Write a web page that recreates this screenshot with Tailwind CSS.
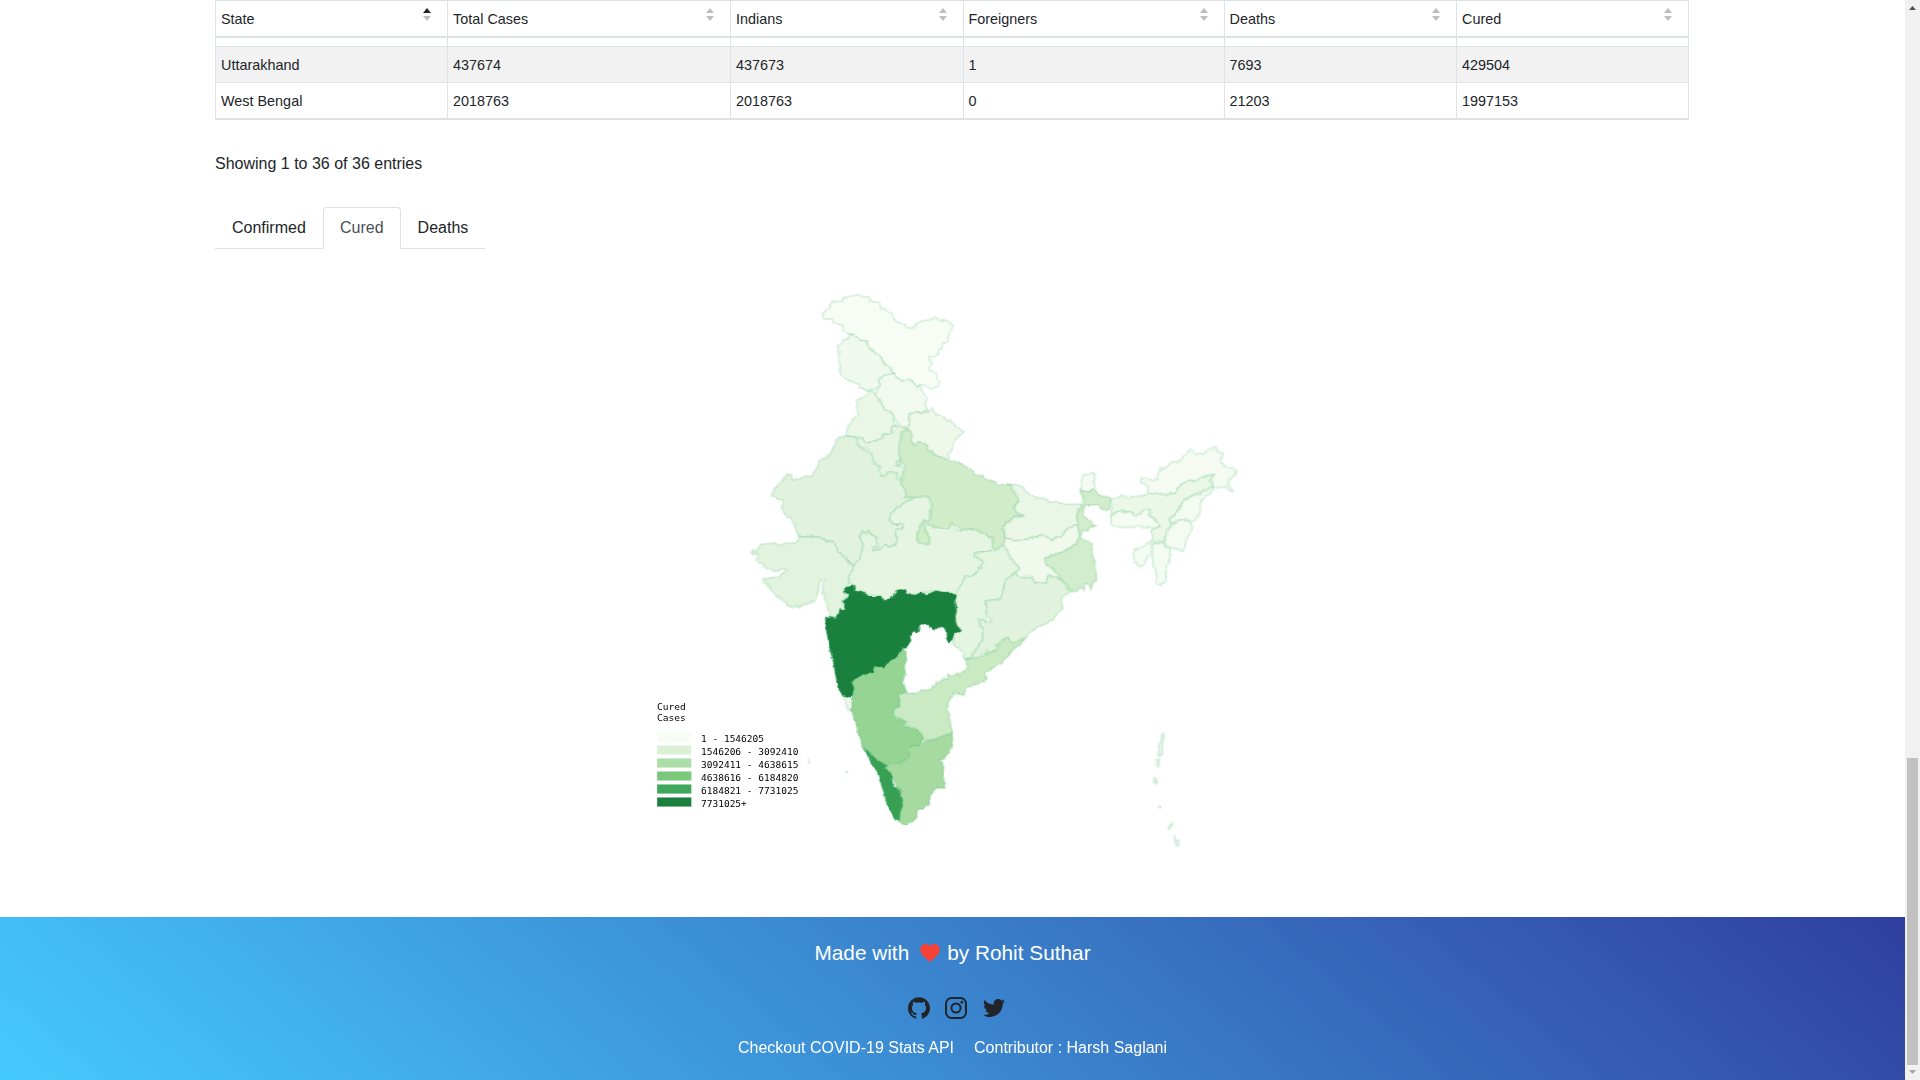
<!DOCTYPE html>
<html lang="en">
<head>
<meta charset="utf-8">
<title>COVID-19 India Stats</title>
<script src="https://cdn.jsdelivr.net/npm/@tailwindcss/browser@4"></script>
</head>
<body class="flex h-[1080px] overflow-hidden bg-white font-['Liberation_Sans',Arial,sans-serif] text-base text-[#212529]">
<div class="flex w-[1905px] flex-col">
  <main class="flex h-[917px] flex-col pl-[215px]">
    <table class="w-[1474px] table-fixed border-separate border-spacing-0 border-l border-[#dee2e6] text-[14.4px] leading-[22px]">
      <colgroup><col class="w-[232px]"><col class="w-[283px]"><col class="w-[232.5px]"><col class="w-[261px]"><col class="w-[232.5px]"><col class="w-[232px]"></colgroup>
      <thead>
        <tr id="head"></tr>
      </thead>
      <tbody id="rows"></tbody>
    </table>

    <p class="mt-8 leading-6">Showing 1 to 36 of 36 entries</p>

    <ul class="mt-[31px] flex w-[270px] border-b border-[#dee2e6] leading-6">
      <li class="-mb-px border border-transparent py-2 pr-[16.2px] pl-4">Confirmed</li>
      <li class="-mb-px rounded-t border border-[#dee2e6] border-b-white bg-white px-4 py-2 text-[#495057]">Cured</li>
      <li class="-mb-px border border-transparent px-4 py-2">Deaths</li>
    </ul>

    <svg class="block h-[668px] w-[1475px]" viewBox="215 249 1475 668" font-family="DejaVu Sans Mono, monospace" font-size="9.52">
      <defs>
        <filter id="coast" filterUnits="userSpaceOnUse" x="730" y="270" width="530" height="600" color-interpolation-filters="sRGB">
          <feTurbulence type="fractalNoise" baseFrequency="0.16" numOctaves="2" seed="4" result="n"/>
          <feDisplacementMap in="SourceGraphic" in2="n" scale="4" xChannelSelector="R" yChannelSelector="G"/>
        </filter>
      </defs>
      <g filter="url(#coast)" transform="translate(-.5 0)" stroke="#45b96c" stroke-opacity=".18" stroke-width="6" stroke-linejoin="round">
        <g transform="translate(800 280) scale(.33333)">
          <path fill="#f7fcf5" d="M70,100 85,85 98,66 133,62 128,56 175,45 190,50 208,50 215,64 238,68 245,82 278,100 284,118 318,135 320,143 338,143 352,130 385,118 400,118 407,110 415,118 445,122 459,138 455,155 448,165 444,188 430,190 428,205 418,210 412,228 388,232 396,250 388,262 392,272 412,276 412,295 424,308 412,320 395,330 378,320 370,312 355,322 345,312 330,298 308,303 290,292 272,262 258,256 245,232 210,205 200,182 182,182 166,166 147,166 130,152 132,138 105,128 97,118 70,116Z"/>
          <path fill="#f0f9ee" d="M147,166 166,166 182,182 200,182 210,205 245,232 258,256 272,262 283,280 265,282 238,298 240,318 228,328 208,333 190,325 178,323 175,312 150,303 123,286 122,262 118,250 118,215 113,200 130,188 132,178 145,176Z"/>
          <path fill="#f2faf0" d="M265,282 283,282 290,292 308,303 330,298 345,312 355,322 362,315 366,330 382,352 378,375 386,397 352,396 332,402 330,435 320,446 300,435 282,412 272,392 252,390 245,368 228,345 240,318 238,298Z"/>
          <path fill="#eaf7e6" d="M208,333 225,335 228,345 245,368 252,390 272,392 282,412 285,425 290,437 278,440 275,460 250,466 250,478 225,480 205,490 188,475 172,472 140,468 142,445 165,412 178,402 170,385 170,362 195,348 205,342Z"/>
          <path fill="#e6f5e2" d="M290,437 300,438 320,446 305,465 298,500 302,530 288,545 300,558 312,560 318,590 298,598 290,575 265,578 255,590 245,588 240,570 220,545 213,512 195,505 175,497 170,478 188,475 205,490 225,480 250,478 250,466 275,460 278,440Z"/>
          <path fill="#d8efd3" d="M290,545 300,534 309,548 303,558 292,554Z"/>
          <path fill="#f0f8ec" d="M332,402 352,396 386,397 397,383 410,402 435,412 455,425 465,435 494,455 478,470 462,485 456,515 448,520 445,540 415,530 398,515 380,508 385,500 362,484 345,496 332,480 340,465 322,446 330,435Z"/>
        </g>
        <g transform="translate(740 420) scale(.33333)">
          <path fill="#e1f3dd" d="M318,47 350,52 352,75 372,88 395,98 405,130 422,145 425,172 448,160 470,155 472,178 490,180 490,195 505,218 495,232 530,230 500,245 455,280 450,300 462,312 490,312 492,322 468,330 475,355 468,375 455,378 432,375 425,388 400,392 398,380 412,380 412,352 395,345 388,332 378,340 368,335 362,355 372,370 365,405 348,436 325,425 312,408 298,395 280,365 260,362 240,352 215,350 178,352 168,325 155,295 138,290 128,275 132,245 98,230 102,208 125,185 142,162 155,165 160,180 190,172 218,168 235,135 242,120 270,105 295,55Z"/>
          <path fill="#e2f4de" d="M178,352 215,350 240,352 260,362 280,365 298,395 325,425 343,437 335,465 325,470 330,490 318,500 315,520 320,545 305,545 318,560 300,572 290,595 270,592 262,560 250,520 250,490 258,478 240,482 238,510 228,538 200,552 165,565 145,558 110,525 70,482 72,472 82,478 118,468 138,452 135,445 105,455 80,445 50,420 55,405 45,400 65,372 105,370 118,376 150,365 165,370 178,360ZM32,400 44,390 42,406Z"/>
          <path fill="#e6f5e2" d="M343,437 348,436 365,405 372,370 362,355 368,335 378,340 388,332 395,345 412,352 412,380 398,380 400,392 425,388 432,375 455,378 468,375 475,355 468,330 492,322 490,312 462,312 450,300 455,280 500,245 530,230 568,235 578,258 570,285 575,300 565,305 552,310 540,322 533,350 540,370 568,375 570,355 555,325 565,312 580,322 625,322 638,310 648,328 668,333 695,323 720,335 758,352 760,385 755,395 705,397 705,408 732,422 725,440 705,465 680,470 665,495 655,532 645,530 635,518 600,515 580,512 545,518 500,522 498,510 475,510 455,532 435,543 425,528 375,522 345,510 347,497 330,490 325,470 335,465Z"/>
        </g>
        <g transform="translate(880 410) scale(.33333)">
          <path fill="#d0ecc9" d="M82,56 100,70 92,90 105,105 122,93 145,108 142,118 170,138 205,150 222,152 240,158 262,172 285,190 310,200 335,210 355,222 398,226 405,245 420,270 405,290 412,308 433,318 400,325 372,350 378,380 372,405 365,420 348,422 340,412 338,382 300,365 275,355 248,363 218,340 205,355 160,352 145,342 137,334 135,355 150,385 148,402 118,400 113,380 120,352 132,330 148,330 155,310 150,305 158,280 150,265 118,258 75,262 80,245 68,225 68,200 78,180 75,165 62,155 58,120 65,85 70,70Z"/>
          <path fill="#eaf6e6" d="M398,226 412,222 432,232 438,245 468,262 488,262 495,270 525,275 565,282 610,283 600,300 592,320 595,345 585,345 560,360 550,380 530,382 520,392 492,375 480,380 445,385 425,395 405,390 378,385 372,350 400,325 433,318 412,308 405,290 420,270 405,245Z"/>
          <path fill="#f1f9ed" d="M378,385 405,390 425,395 445,385 480,380 492,375 520,392 530,382 550,380 560,360 585,345 595,350 600,375 590,400 575,412 550,425 525,435 495,445 500,460 520,475 545,500 545,510 505,495 500,520 480,518 460,515 458,500 425,500 405,492 420,478 400,450 385,425 372,405Z"/>
          <path fill="#d1edcb" d="M602,238 625,242 640,238 660,255 697,265 692,285 685,302 665,298 658,285 620,285 610,300 610,318 630,330 635,342 652,347 628,355 625,362 610,365 603,380 615,390 640,402 640,445 648,460 652,510 640,520 635,540 628,522 615,525 615,543 600,535 580,546 545,510 520,475 500,460 495,445 525,435 550,425 575,412 590,400 600,375 595,350 592,320 600,300 610,283 612,260 602,250Z"/>
          <path fill="#f5fbf3" d="M604,238 608,200 635,187 648,195 642,215 648,235 625,242Z"/>
        </g>
        <g transform="translate(1040 430) scale(.33333)">
          <path fill="#f5fbf3" d="M325,192 325,165 303,158 305,145 355,150 350,140 362,115 385,110 390,97 425,92 440,70 455,57 465,68 490,72 510,58 528,50 540,68 552,75 540,92 555,110 585,115 592,130 570,150 568,165 580,183 568,180 560,170 520,175 520,168 512,150 522,134 500,138 475,148 435,158 415,175 405,190 375,195 355,190Z"/>
          <path fill="#ebf7e7" d="M218,207 245,197 255,202 300,198 330,192 355,190 375,195 405,190 415,175 435,158 475,148 500,138 522,134 512,150 520,168 480,188 450,200 430,215 415,245 390,270 398,283 380,300 372,340 358,335 342,343 335,315 335,300 360,290 350,270 330,258 330,240 315,240 290,258 270,245 230,245 215,260 215,235Z"/>
          <path fill="#f4fbf2" d="M215,260 230,245 270,245 290,258 315,240 330,240 330,258 350,270 360,290 345,296 325,290 240,292 215,282ZM485,190 520,172 525,180 505,195 485,210 482,245 470,270 455,275 435,268 410,272 398,285 390,270 415,245 430,215 450,200ZM342,343 358,335 372,340 378,350 392,355 392,375 388,400 380,410 380,450 365,465 350,463 350,430 342,400 336,370ZM335,335 335,370 320,385 315,405 302,413 285,395 280,375 290,355 315,345Z"/>
          <path fill="#f4fbf2" d="M398,285 410,272 435,268 455,275 458,295 445,320 432,362 400,355 375,345 380,310Z"/>
        </g>
        <g transform="translate(810 570) scale(.33333)">
          <path fill="#e4f5e0" d="M442,80 448,55 455,45 470,20 495,15 515,-10 522,-28 495,-42 495,-53 545,-55 558,-58 582,-75 600,-40 630,-2 615,12 600,20 590,30 575,88 532,92 530,125 532,155 505,148 520,180 520,210 500,235 485,265 465,265 458,245 430,220 435,188 450,190 457,180 440,165 438,140 442,120 435,95Z"/>
          <path fill="#e1f3dd" d="M615,12 635,20 668,20 672,38 710,40 715,15 755,30 785,65 760,80 755,95 762,115 740,135 730,152 690,170 660,190 640,210 610,218 592,202 575,222 560,225 568,235 540,248 530,250 500,262 470,268 485,265 500,235 520,210 520,180 505,148 548,155 530,125 532,92 575,88 590,30Z"/>
          <path fill="#19813d" d="M105,52 125,48 137,46 138,62 165,68 178,78 218,78 225,94 245,82 262,64 285,58 292,72 315,74 335,68 355,72 378,62 400,66 425,66 442,80 435,95 442,120 438,140 440,165 457,180 450,190 435,188 428,212 418,220 410,212 408,178 390,172 378,178 350,165 332,162 325,188 308,188 302,200 305,212 290,235 278,236 262,262 240,272 228,292 195,290 190,310 160,315 130,332 136,350 128,378 112,380 98,375 85,355 78,318 72,280 60,235 50,180 47,145 62,142 78,146 85,130 88,115 103,120 108,108 98,92 110,85 118,72 105,70Z"/>
        </g>
        <g transform="translate(820 640) scale(.33333)">
          <path fill="#c9eac2" d="M620,-8 610,5 575,35 545,70 510,90 495,100 500,120 480,132 445,138 430,167 405,158 388,180 385,205 392,240 398,280 385,285 365,290 345,298 318,303 300,290 295,270 265,260 250,262 260,245 240,240 225,228 222,205 240,200 240,160 262,158 290,160 300,150 325,150 345,140 350,125 385,115 385,102 405,108 410,97 420,105 430,92 447,80 432,58 470,55 500,45 502,30 510,40 538,20 532,15 562,-8 580,8Z"/>
          <path fill="#95d492" d="M248,26 260,35 262,60 255,78 258,100 250,125 262,157 240,160 240,200 222,205 225,228 240,240 260,245 250,262 265,260 295,270 312,295 300,318 290,320 280,316 265,328 268,355 240,370 200,375 178,362 150,340 128,318 118,285 108,245 92,212 98,200 96,170 105,150 98,125 130,105 160,100 165,80 198,80 210,62 232,52Z"/>
          <path fill="#f1f9ee" d="M66,167 82,172 96,168 97,200 90,212 80,190Z"/>
          <path fill="#a6daa0" d="M398,280 400,300 395,325 375,355 365,362 373,375 372,405 376,445 350,445 330,480 330,495 295,510 288,540 258,557 240,547 242,520 250,490 242,470 245,448 228,440 222,418 200,398 195,378 240,370 268,355 265,328 280,316 300,320 312,305 345,298 365,290Z"/>
          <path fill="#37a055" d="M126,318 150,340 178,362 205,378 195,382 215,400 222,440 245,448 242,470 250,490 242,520 240,547 225,535 205,505 195,465 180,420 170,390 155,365Z"/>
          <path fill="#d8efdc" stroke-width="3" d="M80,393 86,392 88,399 83,398ZM-34,360 -29,362 -28,370 -32,368Z"/>
        </g>
        <g transform="translate(1130 710) scale(.33333)" fill="#e8f6ea">
          <path d="M95,75 104,68 102,92 96,94ZM90,97 101,100 100,128 90,140 86,120ZM80,150 91,148 87,172 80,165ZM72,208 80,206 81,220 73,220ZM87,290 94,289 93,295 88,295ZM117,352 130,338 128,350 120,358ZM134,378 148,396 148,412 138,402Z"/>
        </g>
      </g>
      <g fill="#000">
        <text x="657" y="710">Cured</text><text x="657" y="721">Cases</text>
        <text x="701" y="742">1 - 1546205</text>
        <text x="701" y="755">1546206 - 3092410</text>
        <text x="701" y="768">3092411 - 4638615</text>
        <text x="701" y="781">4638616 - 6184820</text>
        <text x="701" y="794">6184821 - 7731025</text>
        <text x="701" y="807">7731025+</text>
      </g>
      <g stroke="#fff" stroke-opacity=".35" stroke-width="1">
        <path fill="#f7fcf5" d="M657 732.5h34.5v9.5h-34.5z"/>
        <path fill="#dbf1d5" d="M657 745.3h34.5v9.5h-34.5z"/>
        <path fill="#aedea7" d="M657 758.3h34.5v9.5h-34.5z"/>
        <path fill="#7bc77c" d="M657 771.3h34.5v9.5h-34.5z"/>
        <path fill="#3fa75a" d="M657 784.3h34.5v9.5h-34.5z"/>
        <path fill="#19813d" d="M657 797.3h34.5v9.5h-34.5z"/>
      </g>
    </svg>
  </main>

  <footer class="flex h-[163px] flex-col items-center bg-[linear-gradient(40deg,#45cafc,#303f9f)] text-white">
    <div class="mt-[21px] flex items-center text-[20.8px] leading-[30px]">
      <span>Made with</span>
      <svg class="mr-[7px] ml-[11px] h-[18px] w-5" viewBox="2 3 20 18.35"><path fill="#f44336" d="M12 21.35l-1.45-1.32C5.4 15.36 2 12.28 2 8.5 2 5.42 4.42 3 7.5 3c1.74 0 3.41.81 4.5 2.09C13.09 3.81 14.76 3 16.5 3 19.58 3 22 5.42 22 8.5c0 3.78-3.4 6.86-8.55 11.54L12 21.35z"/></svg>
      <span>by Rohit Suthar</span>
    </div>
    <div class="mt-[29px] ml-1.5 flex h-[22px] gap-[15px] text-[#212529]">
      <svg class="size-[22px]" viewBox="0 0 24 24" fill="currentColor"><path d="M12 .297c-6.63 0-12 5.373-12 12 0 5.303 3.438 9.8 8.205 11.385.6.113.82-.258.82-.577 0-.285-.01-1.04-.015-2.04-3.338.724-4.042-1.61-4.042-1.61C4.422 18.07 3.633 17.7 3.633 17.7c-1.087-.744.084-.729.084-.729 1.205.084 1.838 1.236 1.838 1.236 1.07 1.835 2.809 1.305 3.495.998.108-.776.417-1.305.76-1.605-2.665-.3-5.466-1.332-5.466-5.93 0-1.31.465-2.38 1.235-3.22-.135-.303-.54-1.523.105-3.176 0 0 1.005-.322 3.3 1.23.96-.267 1.98-.399 3-.405 1.02.006 2.04.138 3 .405 2.28-1.552 3.285-1.23 3.285-1.23.645 1.653.24 2.873.12 3.176.765.84 1.23 1.91 1.23 3.22 0 4.61-2.805 5.625-5.475 5.92.42.36.81 1.096.81 2.22 0 1.606-.015 2.896-.015 3.286 0 .315.21.69.825.57C20.565 22.092 24 17.592 24 12.297c0-6.627-5.373-12-12-12"/></svg>
      <svg class="size-[22px]" viewBox="0 0 24 24" fill="none" stroke="currentColor" stroke-width="2.2"><rect x="1.1" y="1.1" width="21.8" height="21.8" rx="6"/><circle cx="12" cy="12" r="5"/><circle cx="18.4" cy="5.6" r="1.4" fill="currentColor" stroke="none"/></svg>
      <svg class="size-[22px] translate-x-px" viewBox="0 0 24 24" fill="currentColor"><path d="M23.954 4.569c-.885.389-1.83.654-2.825.775 1.014-.611 1.794-1.574 2.163-2.723-.951.555-2.005.959-3.127 1.184-.896-.959-2.173-1.559-3.591-1.559-2.717 0-4.92 2.203-4.92 4.917 0 .39.045.765.127 1.124C7.691 8.094 4.066 6.13 1.64 3.161c-.427.722-.666 1.561-.666 2.475 0 1.71.87 3.213 2.188 4.096-.807-.026-1.566-.248-2.228-.616v.061c0 2.385 1.693 4.374 3.946 4.827-.413.111-.849.171-1.296.171-.314 0-.615-.03-.916-.086.631 1.953 2.445 3.377 4.604 3.417-1.68 1.319-3.809 2.105-6.102 2.105-.39 0-.779-.023-1.17-.067 2.189 1.394 4.768 2.209 7.557 2.209 9.054 0 13.999-7.496 13.999-13.986 0-.209 0-.42-.015-.63.961-.689 1.8-1.56 2.46-2.548l-.047-.02z"/></svg>
    </div>
    <div class="mt-[17px] flex gap-5 leading-6">
      <span>Checkout COVID-19 Stats API</span>
      <span>Contributor : Harsh Saglani</span>
    </div>
  </footer>
</div>

<!-- scrollbar -->
<div class="flex h-[1080px] w-[15px] flex-col items-center bg-[#f1f1f1]">
  <svg class="mt-[5px] h-[5px] w-[7px]" viewBox="0 0 7 5"><path fill="#505050" d="M0 5 3.5 1 7 5z"/></svg>
  <div class="mt-[748px] h-[307px] w-[11px] bg-[#c1c1c1]"></div>
  <svg class="mt-[5px] h-[4px] w-[7px]" viewBox="0 0 7 4"><path fill="#a3a3a3" d="M0 0h7L3.5 4z"/></svg>
</div>

<script>
  const heads = ['State', 'Total Cases', 'Indians', 'Foreigners', 'Deaths', 'Cured'];
  const rows = [
    ['', '', '', '', '', ''],
    ['Uttarakhand', '437674', '437673', '1', '7693', '429504'],
    ['West Bengal', '2018763', '2018763', '0', '21203', '1997153'],
  ];
  document.getElementById('head').innerHTML = heads.map((h, i) => `
    <th class="h-[38px] border-t border-r border-b-2 border-[#dee2e6] p-0 pt-px pl-[5px] text-left font-normal">
      <div class="flex items-start justify-between pr-4"><span>${h}</span>
      <svg class="h-[13px] w-2" viewBox="0 0 8 13"><path fill="${i ? '#bdbebf' : '#212529'}" d="M0 5 4 0 8 5z"/><path fill="#bdbebf" d="M0 8h8L4 13z"/></svg></div>
    </th>`).join('');
  document.getElementById('rows').innerHTML = rows.map((r, i) => `<tr>${r.map(c => `
    <td class="${i === 0 ? 'h-[9px] border-b' : i === 1 ? 'h-9 border-b bg-[#f2f2f2]' : 'h-[37px] border-b-2'} border-r border-[#dee2e6] p-0 pl-[5px]">${c}</td>`).join('')}</tr>`).join('');
</script>
</body>
</html>
